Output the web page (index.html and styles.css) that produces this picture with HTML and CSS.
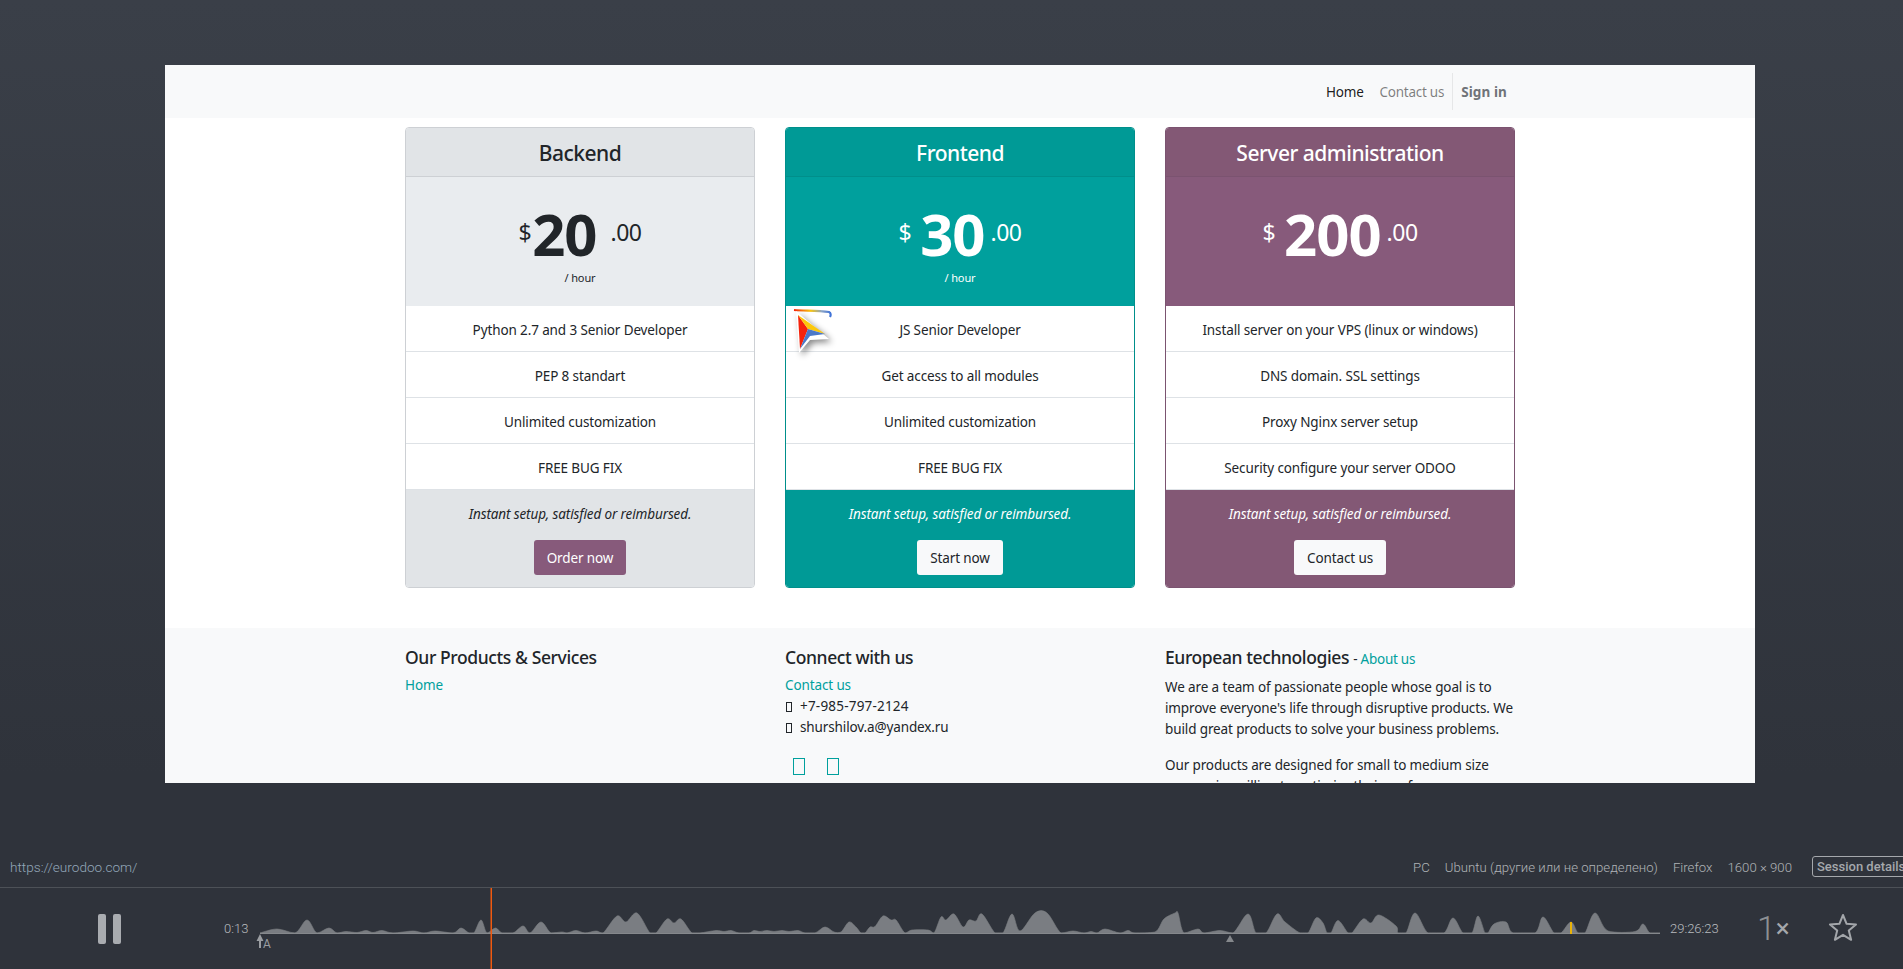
FILE: index.html
```html
<!DOCTYPE html>
<html lang="en">
<head>
    <meta charset="UTF-8">
    <meta name="viewport" content="width=device-width, initial-scale=1.0">
    <title>Session replay - eurodoo.com</title>
    <link rel="stylesheet" href="styles.css">
</head>
<body>

    <div class="frame">
        <nav class="navbar">
            <a class="nav-link active" href="#">Home</a>
            <a class="nav-link" href="#">Contact us</a>
            <a class="nav-link sign-in" href="#">Sign in</a>
        </nav>

        <div class="pricing">
            <div class="card card-grey">
                <h4 class="card-header">Backend</h4>
                <div class="price">
                    <div class="amount"><span class="currency">$</span><b>20</b><span class="cents">.00</span></div>
                    <small>/ hour</small>
                </div>
                <ul class="features">
                    <li>Python 2.7 and 3 Senior Developer</li>
                    <li>PEP 8 standart</li>
                    <li>Unlimited customization</li>
                    <li>FREE BUG FIX</li>
                </ul>
                <div class="card-footer">
                    <em>Instant setup, satisfied or reimbursed.</em>
                    <a class="btn btn-purple" href="#">Order now</a>
                </div>
            </div>

            <div class="card card-teal">
                <h4 class="card-header">Frontend</h4>
                <div class="price">
                    <div class="amount"><span class="currency">$</span><b>30</b><span class="cents">.00</span></div>
                    <small>/ hour</small>
                </div>
                <ul class="features">
                    <li>JS Senior Developer</li>
                    <li>Get access to all modules</li>
                    <li>Unlimited customization</li>
                    <li>FREE BUG FIX</li>
                </ul>
                <div class="card-footer">
                    <em>Instant setup, satisfied or reimbursed.</em>
                    <a class="btn btn-light" href="#">Start now</a>
                </div>
            </div>

            <div class="card card-purple">
                <h4 class="card-header">Server administration</h4>
                <div class="price">
                    <div class="amount"><span class="currency">$</span><b>200</b><span class="cents">.00</span></div>
                </div>
                <ul class="features">
                    <li>Install server on your VPS (linux or windows)</li>
                    <li>DNS domain. SSL settings</li>
                    <li>Proxy Nginx server setup</li>
                    <li>Security configure your server ODOO</li>
                </ul>
                <div class="card-footer">
                    <em>Instant setup, satisfied or reimbursed.</em>
                    <a class="btn btn-light" href="#">Contact us</a>
                </div>
            </div>
        </div>

        <footer class="site-footer">
            <div class="footer-col">
                <h5>Our Products &amp; Services</h5>
                <a href="#">Home</a>
            </div>
            <div class="footer-col">
                <h5>Connect with us</h5>
                <a href="#">Contact us</a>
                <div class="phone"><i class="tofu"></i>+7-985-797-2124</div>
                <div><i class="tofu"></i>shurshilov.a@yandex.ru</div>
                <div class="social"><i class="tofu-big"></i><i class="tofu-big"></i></div>
            </div>
            <div class="footer-col">
                <h5>European technologies <span class="about">- <a href="#">About us</a></span></h5>
                <p>We are a team of passionate people whose goal is to improve everyone's life through disruptive products. We build great products to solve your business problems.</p>
                <p>Our products are designed for small to medium size companies willing to optimize their performance.</p>
            </div>
        </footer>

        <!-- recorded mouse pointer -->
        <svg class="cursor" width="44" height="44" viewBox="0 0 44 44">
            <defs>
                <linearGradient id="trail">
                    <stop offset="0" stop-color="#f5230c"/>
                    <stop offset="0.45" stop-color="#f8c40e"/>
                    <stop offset="0.75" stop-color="#8ea6c4"/>
                    <stop offset="1" stop-color="#3f72d8"/>
                </linearGradient>
            </defs>
            <path d="M1 2 C12 3 24 2 36 4 C38 5 38 7 37 9" fill="none" stroke="url(#trail)" stroke-width="2.2"/>
            <g class="cursor-arrow">
                <path d="M3 8 L36 36 L17 37 L6 50 Z" fill="#fff" transform="translate(0 -5)"/>
                <path d="M5 7 L15 21 L7 41 Z" fill="#f5230c"/>
                <path d="M5 7 L32 26 L15 21 Z" fill="#fcc80b"/>
                <path d="M15 21 L32 26 L17 28 L7 41 Z" fill="#4a78c8"/>
            </g>
        </svg>
    </div>

    <div class="player">
        <div class="session-info">
            <span class="session-url">https://eurodoo.com/</span>
            <span>PC</span>
            <span>Ubuntu (другие или не определено)</span>
            <span>Firefox</span>
            <span>1600 × 900</span>
            <button class="session-btn">Session details</button>
        </div>
        <div class="controls">
            <div class="pause"><span></span><span></span></div>
            <span class="time">0:13</span>
            <svg class="timeline" id="timeline" width="1400" height="81" viewBox="0 0 1400 81">
                <path id="activity" fill="#7a7d82" stroke="#7a7d82" stroke-width="0.6"/>
                <line x1="0" y1="45.5" x2="1400" y2="45.5" stroke="#85888c" stroke-width="1"/>
                <path d="M0 46 L3.5 53 H1 V60 H-1 V53 H-3.5 Z" fill="#9a9da1"/>
                <text class="mark-letter" x="3" y="60">A</text>
                <path d="M970 47 L974 54 H966 Z" fill="#85888c"/>
                <rect x="1310" y="34" width="2" height="12" fill="#eab308"/>
                <rect x="230.5" y="0" width="1.5" height="81" fill="#f0590f"/>
            </svg>
            <span class="time time-end">29:26:23</span>
            <span class="speed">1<small>×</small></span>
            <svg class="star" width="30" height="28" viewBox="0 0 30 28">
                <path d="M15 2 L18.6 10.8 L28 11.5 L20.8 17.6 L23.1 26.8 L15 21.8 L6.9 26.8 L9.2 17.6 L2 11.5 L11.4 10.8 Z" fill="none" stroke="#a3a6aa" stroke-width="2" stroke-linejoin="round"/>
            </svg>
        </div>
    </div>

    <script src="timeline.js"></script>
</body>
</html>
```

FILE: styles.css
```css
* {
    box-sizing: border-box;
}

html, body {
    height: 100%;
}

body {
    margin: 0;
    height: 969px;
    overflow: hidden;
    display: flex;
    flex-direction: column;
    font-family: 'Noto Sans', 'Open Sans', sans-serif;
    font-size: 13.5px;
    letter-spacing: -0.12px;
    line-height: 21px;
    color: #212529;
    background: linear-gradient(#3a3f48, #2f333b 80%);
}

a {
    color: #00a09d;
    text-decoration: none;
}

/* recorded page */
.frame {
    position: relative;
    flex: none;
    width: 1590px;
    height: 718px;
    margin: 65px 0 0 165px;
    overflow: hidden;
    background-color: white;
}

.navbar {
    display: flex;
    justify-content: flex-end;
    height: 53px;
    padding: 8px 240px 8px 0;
    background-color: #f8f9fa;
}

.nav-link {
    padding: 9px 8px 7px;
    letter-spacing: -0.25px;
    color: rgba(0, 0, 0, 0.5);
}

.nav-link.active {
    color: rgba(0, 0, 0, 0.9);
}

.sign-in {
    border-left: 1px solid #e6e7e8;
    font-weight: 700;
    letter-spacing: 0.1px;
    color: #6f7378;
}

.pricing {
    display: grid;
    grid-template-columns: repeat(3, 350px);
    gap: 30px;
    width: 1110px;
    margin: 9px auto 40px;
}

.card {
    border: 1px solid;
    border-radius: 4px;
    overflow: hidden;
}

.card-header {
    margin: 0;
    height: 49px;
    padding-top: 11px;
    font-size: 21px;
    line-height: 28px;
    font-weight: 500;
    letter-spacing: -0.5px;
    text-align: center;
    border-bottom: 1px solid;
}

.price {
    height: 129px;
    padding-top: 23px;
    text-align: center;
}

.amount {
    display: flex;
    justify-content: center;
    align-items: center;
    height: 68px;
}

.amount b {
    font-size: 58px;
    line-height: 66px;
    font-weight: 700;
    letter-spacing: -1px;
    margin: 0 14px 0 1px;
}

.currency, .cents {
    font-size: 23px;
    letter-spacing: -0.5px;
    margin-top: -4px;
}

.card-teal .amount b, .card-purple .amount b {
    margin: 0 6px 0 9px;
}

.price small {
    display: block;
    margin-top: -1px;
    font-size: 11px;
}

.features {
    margin: 0;
    padding: 0;
    list-style: none;
    background-color: white;
}

.features li {
    height: 46px;
    padding: 14px 20px 10px;
    text-align: center;
    border-bottom: 1px solid #dee2e6;
}

.card-footer {
    display: flex;
    flex-direction: column;
    align-items: center;
    height: 97px;
    padding-top: 14px;
}

.btn {
    margin-top: 15px;
    height: 35px;
    padding: 8px 13px 6px;
    border-radius: 3px;
}

.btn-purple {
    background-color: #875a7b;
    color: white;
}

.btn-light {
    background-color: #f8f9fa;
    color: #212529;
}

.card-grey {
    border-color: #cdd0d4;
}

.card-grey .card-header, .card-grey .card-footer {
    background-color: #e1e4e7;
    border-color: #cdd0d4;
}

.card-grey .price {
    background-color: #e9ecef;
}

.card-teal {
    border-color: #008f8b;
    color: white;
}

.card-teal .card-header, .card-teal .card-footer {
    background-color: #009a96;
    border-color: #008f8b;
}

.card-teal .price {
    background-color: #00a09d;
}

.card-purple {
    border-color: #7b5370;
    color: white;
}

.card-purple .card-header, .card-purple .card-footer {
    background-color: #835875;
    border-color: #7b5370;
}

.card-purple .price {
    background-color: #875a7b;
}

.features li {
    color: #212529;
}

.site-footer {
    display: grid;
    grid-template-columns: repeat(3, 350px);
    gap: 30px;
    height: 300px;
    padding: 19px 240px 0;
    background-color: #f8f9fa;
}

.footer-col h5 {
    margin: 0 0 7px;
    font-size: 17.5px;
    line-height: 21px;
    font-weight: 500;
    letter-spacing: -0.4px;
}

.about {
    font-size: 13.5px;
    font-weight: 400;
    letter-spacing: -0.25px;
}

.footer-col p {
    margin: 0 0 15px;
}

.phone {
    letter-spacing: 0.2px;
}

.tofu {
    display: inline-block;
    width: 6px;
    height: 10px;
    margin: 0 8px 0 1px;
    border: 1px solid #212529;
    vertical-align: -1px;
}

.social {
    display: flex;
    gap: 22px;
    margin: 20px 0 0 8px;
}

.tofu-big {
    width: 12px;
    height: 17px;
    border: 1px solid #00a09d;
}

.cursor {
    position: absolute;
    left: 628px;
    top: 243px;
    overflow: visible;
}

.cursor-arrow {
    filter: drop-shadow(3px 3px 3px rgba(0, 0, 0, 0.45));
}

/* player */
.player {
    flex: 1;
    display: flex;
    flex-direction: column;
    overflow: hidden;
    font-family: 'Roboto', sans-serif;
    letter-spacing: 0;
}

.session-info {
    flex: none;
    display: flex;
    align-items: center;
    gap: 15px;
    height: 32px;
    margin: 72px -9px 0 10px;
    padding-bottom: 8px;
    font-weight: 300;
    font-size: 13.2px;
    color: #b0b3b7;
}

.session-url {
    margin-right: auto;
    font-size: 13.6px;
    color: #94a8ba;
}

.session-btn {
    flex: none;
    width: 100px;
    height: 21px;
    margin: -1px 0 0 5px;
    padding: 0 4px;
    background: none;
    border: 1px solid #a5a8ac;
    border-radius: 3px;
    font-family: inherit;
    font-size: 13px;
    font-weight: 500;
    line-height: 17px;
    white-space: nowrap;
    text-align: left;
    color: #a5a8ac;
}

.controls {
    flex: 1;
    display: flex;
    align-items: flex-start;
    border-top: 1px solid #4d5157;
}

.pause {
    display: flex;
    gap: 7px;
    margin: 26px 0 0 98px;
}

.pause span {
    width: 8px;
    height: 30px;
    border-radius: 2px;
    background-color: #a9acb0;
}

.time {
    margin: 30px 0 0 103px;
    width: 36px;
    font-size: 13px;
    font-weight: 300;
    color: #b8bbbf;
}

.timeline {
    flex: none;
    overflow: visible;
}

.mark-letter {
    font-size: 12px;
    fill: #9a9da1;
}

.time-end {
    width: 60px;
    margin-left: 10px;
}

.speed {
    margin: 20px 0 0 27px;
    font-size: 34px;
    line-height: 40px;
    font-weight: 300;
    color: #8d9094;
}

.speed small {
    font-size: 26px;
    font-weight: 400;
    vertical-align: 3px;
    color: #a5a8ac;
}

.star {
    margin: 25px 0 0 38px;
}
```

FILE: timeline.js
```js
// activity graph: [x, height above the baseline]
const points = [
    [0,0],[17,4],[35,0],[47,13],[57,0],[69,5],[77,0],[86,1.5],[97,.5],[106,2.5],[113,.5],[122,2.5],[133,0],
    [153,2],[164,0],[175,2],[193,0],[201,5],[209,0],[214,0],[221,13],[227,0],[235.5,5],[242,0],[253,0],[263,7],
    [270,0],[281,11],[291,0],[302,1],[307,0],[316,2.5],[325,0],[336,2],[343,0],[357,17],[366,11],[377,20],[390,0],
    [396,0],[407,14],[414,10],[421,14],[432,0],[440,0],[456,2.5],[464,1.5],[471,2.5],[479,0],[489,0],[494,2.5],
    [500,1.5],[507,2.5],[514,1.5],[522,2.5],[529,1.5],[538,2.5],[545,0],[555,0],[565,6],[574,1],[581,1],[589,11],
    [596,6],[601,0],[605,0],[610,6],[615,6.5],[623,17],[631,13],[636,13],[645,0],[652,3],[668,3],[674,0],[681,16],
    [686,13],[694,19],[703,6],[709,13],[716,12],[722,19],[735,0],[743,0],[752,19],[760,2],[775,20],[787,20],[801,0],
    [813,2],[824,0],[831,1.5],[837,0],[845,4],[860,0],[868,2.5],[875,0],[895,1],[904,14],[915,20],[918,20],[924,0],
    [938,4],[944,0],[960,2.5],[973,0],[988,19],[996,0],[1006,0],[1017,19],[1025,11],[1040,0],[1048,0],[1056,15],
    [1063,10],[1067,0],[1071,0],[1078,12.5],[1088,0],[1092,0],[1103,14],[1111,10],[1119,18],[1136,7],[1138,0],
    [1146,0],[1155,20],[1168,0],[1184,0],[1193,15],[1203,0],[1212,0],[1218,17],[1225,0],[1228,0],[1234,9],[1246,11],
    [1253,0],[1275,0],[1283,16],[1294,0],[1301,0],[1311,11],[1318,0],[1325,0],[1335,20],[1348,2],[1375,1.5],[1383,9],
    [1390,0],[1400,0]
];

const base = 45;
let d = `M0 ${base}`;

// Catmull-Rom through the points, kept above the baseline
for (let i = 0; i < points.length - 1; i++) {
    const p0 = points[Math.max(i - 1, 0)];
    const p1 = points[i];
    const p2 = points[i + 1];
    const p3 = points[Math.min(i + 2, points.length - 1)];
    const c1x = p1[0] + (p2[0] - p0[0]) / 6;
    const c1h = Math.max(p1[1] + (p2[1] - p0[1]) / 6, 0);
    const c2x = p2[0] - (p3[0] - p1[0]) / 6;
    const c2h = Math.max(p2[1] - (p3[1] - p1[1]) / 6, 0);
    d += ` C${c1x} ${base - c1h} ${c2x} ${base - c2h} ${p2[0]} ${base - p2[1]}`;
}

document.getElementById('activity').setAttribute('d', d + ' Z');
```
